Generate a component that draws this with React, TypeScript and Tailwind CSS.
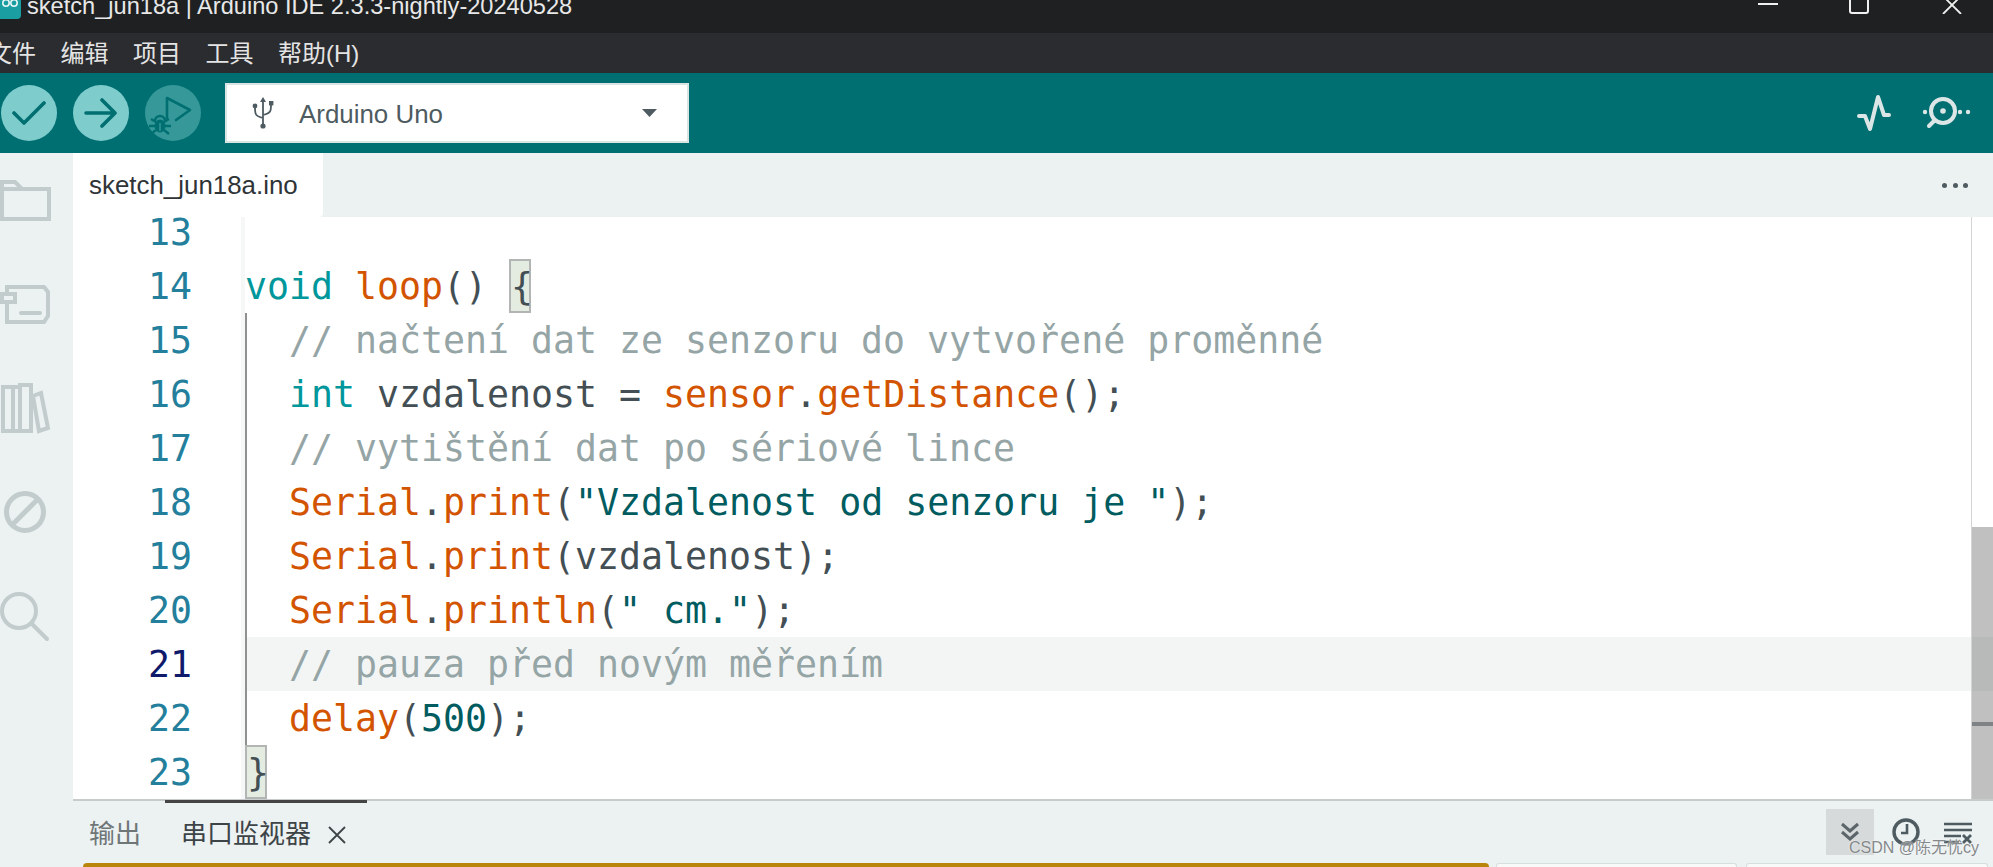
import type { ReactNode } from "react";

const ui = { fontFamily: '"Liberation Sans", "Noto Sans CJK SC", sans-serif' };
const mono = { fontFamily: '"DejaVu Sans Mono", monospace' };

const C = ({ children }: { children: ReactNode }) => <span className="text-[#95a5a6]">{children}</span>;
const K = ({ children }: { children: ReactNode }) => <span className="text-[#00979c]">{children}</span>;
const F = ({ children }: { children: ReactNode }) => <span className="text-[#d35400]">{children}</span>;
const S = ({ children }: { children: ReactNode }) => <span className="text-[#005c5f]">{children}</span>;

const Brace = ({ children }: { children: ReactNode }) => (
  <span className="inline-block h-[54px] w-[22px] border-2 border-[#b3b5b5] bg-[#e4ece2] leading-[52px] align-top">
    {children}
  </span>
);

const rows: { n: number; code?: ReactNode; guide?: boolean }[] = [
  { n: 13 },
  {
    n: 14,
    code: (
      <>
        <K>void</K> <F>loop</F>() <Brace>{"{"}</Brace>
      </>
    ),
  },
  { n: 15, guide: true, code: <>{"  "}<C>// načtení dat ze senzoru do vytvořené proměnné</C></> },
  {
    n: 16,
    guide: true,
    code: (
      <>
        {"  "}<K>int</K> vzdalenost = <F>sensor</F>.<F>getDistance</F>();
      </>
    ),
  },
  { n: 17, guide: true, code: <>{"  "}<C>// vytištění dat po sériové lince</C></> },
  {
    n: 18,
    guide: true,
    code: (
      <>
        {"  "}<F>Serial</F>.<F>print</F>(<S>"Vzdalenost od senzoru je "</S>);
      </>
    ),
  },
  {
    n: 19,
    guide: true,
    code: (
      <>
        {"  "}<F>Serial</F>.<F>print</F>(vzdalenost);
      </>
    ),
  },
  {
    n: 20,
    guide: true,
    code: (
      <>
        {"  "}<F>Serial</F>.<F>println</F>(<S>" cm."</S>);
      </>
    ),
  },
  { n: 21, guide: true, code: <>{"  "}<C>// pauza před novým měřením</C></> },
  {
    n: 22,
    guide: true,
    code: (
      <>
        {"  "}<F>delay</F>(<S>500</S>);
      </>
    ),
  },
  { n: 23, code: <Brace>{"}"}</Brace> },
];

function ToolButton({ children, dim }: { children: ReactNode; dim?: boolean }) {
  return (
    <div
      className={`flex h-[56px] w-[56px] shrink-0 items-center justify-center rounded-full ${
        dim ? "bg-[#369899]" : "bg-[#7fcccd]"
      }`}
    >
      {children}
    </div>
  );
}

export default function App() {
  return (
    <div className="flex h-[867px] w-[1993px] flex-col overflow-hidden bg-white" style={ui}>
      {/* title bar */}
      <div className="flex h-[33px] shrink-0 overflow-hidden bg-[#1e2022] text-[#e8e8e8]">
        <svg width="21" height="19" viewBox="0 0 21 19" className="shrink-0">
          <rect x="-6" y="-6" width="27" height="25" rx="4" fill="#1b9ea1" />
          <circle cx="6" cy="3" r="3.2" fill="none" stroke="#e6f5f5" strokeWidth="1.6" />
          <circle cx="14" cy="3" r="3.2" fill="none" stroke="#e6f5f5" strokeWidth="1.6" />
        </svg>
        <div className="ml-[6px] -mt-[11px] h-[34px] text-[23.6px] leading-[34px] whitespace-nowrap">
          sketch_jun18a | Arduino IDE 2.3.3-nightly-20240528
        </div>
        <div className="ml-auto flex items-start">
          <div className="mt-[3px] mr-[71px] h-[2px] w-[20px] bg-[#f0f0f0]" />
          <div className="-mt-[4px] mr-[73px] h-[18px] w-[20px] rounded-[3px] border-2 border-[#f0f0f0]" />
          <svg width="20" height="14" viewBox="0 0 20 14" className="mr-[31px]">
            <path d="M3 -2 L19 14 M17 -2 L1 14" stroke="#f0f0f0" strokeWidth="1.8" />
          </svg>
        </div>
      </div>

      {/* menu bar */}
      <div className="flex h-[40px] shrink-0 items-center gap-[24.5px] bg-[#2b2c30] pt-[2px] text-[24px] text-[#e4e4e4]">
        <span className="-ml-[12px]">文件</span>
        <span>编辑</span>
        <span>项目</span>
        <span>工具</span>
        <span>帮助(H)</span>
      </div>

      {/* toolbar */}
      <div className="flex h-[80px] shrink-0 items-center bg-[#006f71] pl-px">
        <div className="flex gap-[16px]">
          <ToolButton>
            <svg width="34" height="24" viewBox="0 0 34 24" fill="none">
              <path d="M2 12 L12 22 L32 2" stroke="#006f71" strokeWidth="3.6" strokeLinecap="round" strokeLinejoin="round" />
            </svg>
          </ToolButton>
          <ToolButton>
            <svg width="34" height="30" viewBox="0 0 34 30" fill="none">
              <path d="M2 15 H31 M18 2 L31 15 L18 28" stroke="#006f71" strokeWidth="3.6" strokeLinecap="round" strokeLinejoin="round" />
            </svg>
          </ToolButton>
          <ToolButton dim>
            <svg width="56" height="56" viewBox="0 0 56 56" fill="none" stroke="#006f71">
              <path d="M22 33 V13 L45 25 L31 35" strokeWidth="2.6" strokeLinejoin="round" strokeLinecap="round" />
              <ellipse cx="15" cy="41" rx="5.5" ry="6.5" fill="#006f71" strokeWidth="0" />
              <path d="M6 34 L11 37 M4 41 H26 M6 49 L11 45 M24 34 L19 37 M24 49 L19 45" strokeWidth="2.4" />
              <path d="M10 36 A5 5 0 0 1 20 36" strokeWidth="2.4" />
              <path d="M15 38 V46" stroke="#369899" strokeWidth="1.4" />
            </svg>
          </ToolButton>
        </div>
        <div className="ml-[24px] flex h-[60px] w-[464px] items-center border-2 border-[#d9e4e4] bg-white pl-[25px] pr-[30px] text-[#4e5b61]">
          <svg width="22" height="32" viewBox="0 0 22 32" fill="none" stroke="#4e5b61" className="shrink-0">
            <path d="M11 4 V29 M11 21 C3 19 3 17 3 10 M11 18 C19 16 19 14 19 8" strokeWidth="1.8" />
            <path d="M11 0 L14 5 H8 Z" fill="#4e5b61" strokeWidth="0" />
            <circle cx="3" cy="9" r="2.4" fill="#4e5b61" strokeWidth="0" />
            <rect x="17" y="4" width="4.4" height="4.4" fill="#4e5b61" strokeWidth="0" />
            <circle cx="11" cy="29" r="2.6" fill="#4e5b61" strokeWidth="0" />
          </svg>
          <span className="ml-[25px] mt-[2px] text-[25.9px]">Arduino Uno</span>
          <svg width="15" height="8" viewBox="0 0 15 8" className="ml-auto">
            <path d="M0 0 H15 L7.5 8 Z" fill="#4e5b61" />
          </svg>
        </div>
        <div className="ml-auto flex items-center">
          <svg width="34" height="38" viewBox="0 0 34 38" fill="none" className="mr-[31px]">
            <path d="M2 22 H8 L13 35 L21 3 L27 21 H32" stroke="#dde6e6" strokeWidth="4" strokeLinecap="round" strokeLinejoin="round" />
          </svg>
          <svg width="50" height="32" viewBox="0 0 50 32" fill="none" className="mr-[21px]">
            <circle cx="3" cy="15" r="2.2" fill="#dde6e6" />
            <circle cx="21" cy="14" r="12" stroke="#dde6e6" strokeWidth="4" />
            <circle cx="21" cy="14" r="2.8" fill="#dde6e6" />
            <path d="M12 24 L7 29" stroke="#dde6e6" strokeWidth="4" strokeLinecap="round" />
            <circle cx="38" cy="15" r="2.2" fill="#dde6e6" />
            <circle cx="46" cy="15" r="2.2" fill="#dde6e6" />
          </svg>
        </div>
      </div>

      <div className="flex min-h-0 flex-1">
        {/* side bar */}
        <div className="flex w-[73px] shrink-0 flex-col bg-[#ecf1f1]">
          <svg width="73" height="500" viewBox="0 0 73 500" fill="none" stroke="#c2cccd" strokeWidth="4">
            <path d="M2 36 V66 H49 V36 Z M2 36 V29 H15 L22 36" />
            <path d="M2 141 H15 V149 H2 Z M7 141 V134 H44 L48 139 V163 L44 169 H7 V149" />
            <path d="M21 160 H40" strokeLinecap="round" />
            <path d="M3 234 H13 V278 H3 Z M13 234 H20 M13 278 H31 V232 H20 V278 M33 243 L41 240 L48 275 L39 278 Z" />
            <circle cx="25" cy="359" r="18.5" strokeWidth="5" />
            <path d="M12 372 L38 346" strokeWidth="5" />
            <circle cx="19" cy="458" r="17" />
            <path d="M32 471 L47 486" strokeLinecap="round" />
          </svg>
        </div>

        <div className="flex min-w-0 flex-1 flex-col">
          {/* tab strip */}
          <div className="flex h-[64px] shrink-0 items-stretch bg-[#ecf1f1]">
            <div className="flex w-[250px] items-center rounded-br-sm bg-white pl-[16px] text-[25.9px] text-[#2f3437]">
              sketch_jun18a.ino
            </div>
            <div className="ml-auto mr-[25px] flex items-center gap-[5.5px]">
              <span className="h-[5px] w-[5px] rounded-full bg-[#4e5b61]" />
              <span className="h-[5px] w-[5px] rounded-full bg-[#4e5b61]" />
              <span className="h-[5px] w-[5px] rounded-full bg-[#4e5b61]" />
            </div>
          </div>

          {/* editor */}
          <div className="relative min-h-0 flex-1 overflow-hidden border-b-2 border-[#c8cbcc]">
            <div className="-mt-[12px] text-[36.56px] leading-[56px] whitespace-pre text-[#434f54]" style={mono}>
              {rows.map((r) => (
                <div key={r.n} className={`flex h-[54px] ${r.n === 21 ? "bg-[#f3f5f5]" : ""}`}>
                  <div
                    className={`w-[119px] shrink-0 bg-white text-right ${
                      r.n === 21 ? "text-[#0f1a6b]" : "text-[#237f9b]"
                    }`}
                  >
                    {r.n}
                  </div>
                  <div className="w-[49px] shrink-0 bg-white" />
                  <div className="w-[4px] shrink-0 bg-[#f6f7f7]" />
                  <div className={`min-w-0 flex-1 ${r.guide ? "shadow-[inset_2px_0_0_#8f9191]" : ""}`}>{r.code}</div>
                </div>
              ))}
            </div>
            {/* scrollbar */}
            <div className="absolute inset-y-0 right-0 w-[22px] border-l border-[#d4d4d4]">
              <div className="relative mt-[310px] h-[272px] bg-[#c0c0c0]">
                <div className="absolute inset-x-0 top-[110px] h-[54px] bg-[#b8baba]" />
                <div className="absolute inset-x-0 top-[195px] h-[4px] bg-[#7f8386]" />
              </div>
            </div>
          </div>
        </div>
      </div>

      {/* bottom panel */}
      <div className="relative flex h-[66px] shrink-0 bg-[#ecf1f1] text-[26px]">
        <div className="ml-[89px] mt-[14px] leading-[38px] text-[#6f7678]">输出</div>
        <div className="ml-[24px] -mt-px flex h-[62px] w-[202px] items-start border-t-[3px] border-[#444] pl-[16px] pt-[12px] leading-[38px] text-[#3d4447]">
          串口监视器
          <svg width="18" height="18" viewBox="0 0 18 18" className="ml-[17px] mt-[11px] shrink-0">
            <path d="M1 1 L17 17 M17 1 L1 17" stroke="#3d4447" strokeWidth="1.8" />
          </svg>
        </div>
        <div className="ml-auto mr-[20px] mt-[8px] flex h-[46px] items-center">
          <div className="flex h-[46px] w-[48px] items-center justify-center bg-[#d6dadb]">
            <svg width="20" height="20" viewBox="0 0 20 20" fill="none" stroke="#5c666a" strokeWidth="3">
              <path d="M2 2 L10 9 L18 2 M2 10 L10 17 L18 10" />
            </svg>
          </div>
          <svg width="28" height="28" viewBox="0 0 28 28" fill="none" stroke="#4e5b61" className="ml-[18px]">
            <circle cx="14" cy="14" r="12" strokeWidth="3.4" />
            <path d="M15 6 V15 H9" strokeWidth="2.6" />
          </svg>
          <svg width="29" height="24" viewBox="0 0 29 24" fill="none" stroke="#4e5b61" className="ml-[24px] mt-[4px]">
            <path d="M0 2 H28 M0 8 H28 M0 14 H17 M0 20 H15" strokeWidth="2.4" />
            <path d="M19 13 L27 21 M27 13 L19 21" strokeWidth="2.8" />
          </svg>
        </div>
        <div
          className="absolute right-[14px] top-[34px] text-[16px] leading-[26px] text-[#85898b]"
          style={{ textShadow: "0 0 2px #fff" }}
        >
          CSDN @陈无忧cy
        </div>
        <div className="absolute inset-x-0 bottom-0 flex h-[4px] pl-[83px]">
          <div className="w-[406px] grow rounded-t-[4px] bg-[#b9860b]" />
          <div className="ml-[7px] w-[241px] rounded-t-[3px] border-x border-t border-[#d6dfdf] bg-[#f8fafa]" />
          <div className="ml-[9px] mr-[5px] w-[242px] rounded-t-[3px] border-x border-t border-[#d6dfdf] bg-[#f8fafa]" />
        </div>
      </div>
    </div>
  );
}
